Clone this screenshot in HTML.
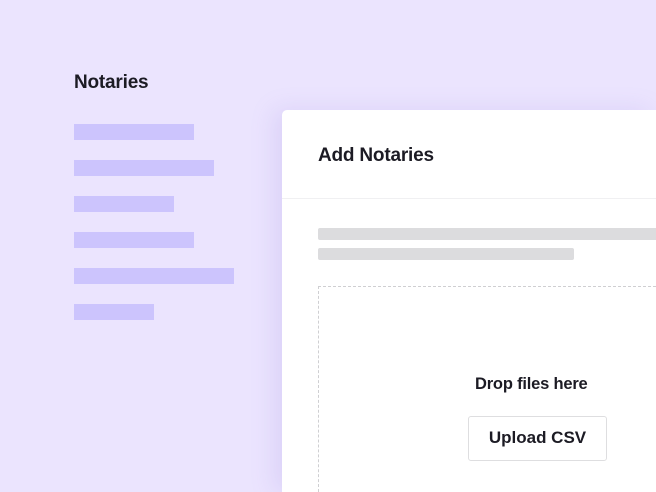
<!DOCTYPE html>
<html style="overflow:hidden;width:656px;height:492px"><head><style>
body{margin:0;width:656px;height:492px;background:#ebe4fe;position:relative;overflow:hidden;font-family:"Liberation Sans",sans-serif;color:#1c1b24}
.t{position:absolute;left:74px;top:72px;font-size:19px;font-weight:600;letter-spacing:-0.2px}
.b{position:absolute;left:74px;height:16px;background:#ccc4fd}
.card{position:absolute;left:282px;top:110px;width:374px;height:382px;background:#fff;border-radius:5px 0 0 0;box-shadow:-8px 0 24px rgba(150,130,220,0.18);overflow:hidden}
.h{position:absolute;left:36px;top:35px;font-size:19px;font-weight:600;letter-spacing:-0.2px}
.div{position:absolute;left:0;right:0;top:88px;height:1px;background:#f0f0f2}
.s{position:absolute;left:36px;height:12px;background:#dcdcde;border-radius:2px}
.dz{position:absolute;left:36px;top:176px;width:338px;height:206px;border:1.5px dashed #cfcfd2;border-right:none;border-bottom:none;box-sizing:border-box}
.df{position:absolute;left:193px;top:265px;font-size:16.5px;font-weight:600;letter-spacing:-0.2px}
.btn{position:absolute;left:186px;top:306px;width:139px;height:45px;box-sizing:border-box;border:1.5px solid #dedee0;border-radius:3px;font-size:17px;font-weight:600;text-align:center;line-height:42px}
</style></head><body>
<div class="t">Notaries</div>
<div class="b" style="top:124px;width:120px"></div>
<div class="b" style="top:160px;width:140px"></div>
<div class="b" style="top:196px;width:100px"></div>
<div class="b" style="top:232px;width:120px"></div>
<div class="b" style="top:268px;width:160px"></div>
<div class="b" style="top:304px;width:80px"></div>
<div class="card">
<div class="h">Add Notaries</div>
<div class="div"></div>
<div class="s" style="top:118px;width:338px;border-radius:2px 0 0 2px"></div>
<div class="s" style="top:138px;width:256px"></div>
<div class="dz"></div>
<div class="df">Drop files here</div>
<div class="btn">Upload CSV</div>
</div>
</body></html>
